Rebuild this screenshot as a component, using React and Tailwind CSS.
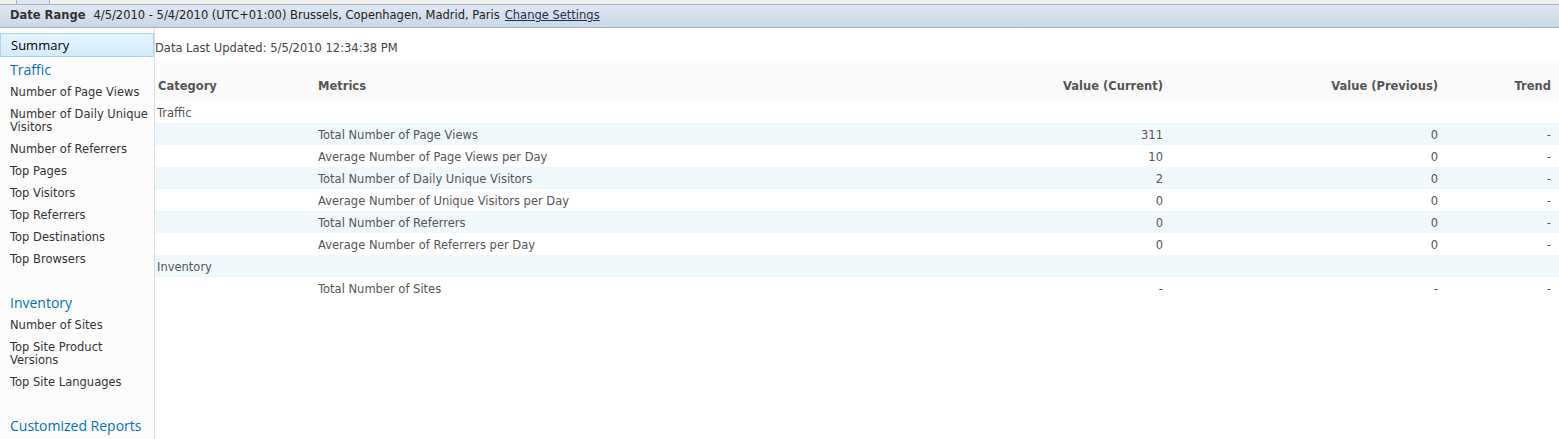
import React from "react";

const verdana = "font-['DejaVu_Sans',Verdana,sans-serif]";
const segoe = "font-['Open_Sans','Noto_Sans',sans-serif]";

const rows = [
  { cat: "Traffic", bg: false },
  { metric: "Total Number of Page Views", cur: "311", prev: "0", trend: "-", bg: true },
  { metric: "Average Number of Page Views per Day", cur: "10", prev: "0", trend: "-", bg: false },
  { metric: "Total Number of Daily Unique Visitors", cur: "2", prev: "0", trend: "-", bg: true },
  { metric: "Average Number of Unique Visitors per Day", cur: "0", prev: "0", trend: "-", bg: false },
  { metric: "Total Number of Referrers", cur: "0", prev: "0", trend: "-", bg: true },
  { metric: "Average Number of Referrers per Day", cur: "0", prev: "0", trend: "-", bg: false },
  { cat: "Inventory", bg: true },
  { metric: "Total Number of Sites", cur: "-", prev: "-", trend: "-", bg: false },
];

function NavHeading({ children, className = "" }) {
  return (
    <div className={`${segoe} text-[14px] text-[#0072bc] px-[10px] leading-[22px] ${className}`}>
      {children}
    </div>
  );
}

function NavItem({ children }) {
  return (
    <div className="pl-[10px] pr-[4px] py-[4.5px] text-[11.5px] leading-[13px] text-[#333]">{children}</div>
  );
}

export default function App() {
  return (
    <div className={`w-full h-[439px] overflow-hidden bg-white ${verdana}`}>
      {/* top strip with tab */}
      <div className="h-[5px] bg-[#f2f2f2] border-b border-[#a8aeb8] flex">
        <div className="ml-[16px] w-[34px] h-[4px] bg-[#dde8f4] border-x border-[#9fb2c8]" />
      </div>

      {/* date range bar */}
      <div className="h-[23px] flex items-center px-[10px] bg-gradient-to-b from-[#dfe8f3] to-[#cad7e7] border-b border-[#a4adbd] text-[11.5px] text-[#222]">
        <span className="font-bold text-[#333]">Date Range</span>
        <span className="ml-[8px]">4/5/2010 - 5/4/2010 (UTC+01:00) Brussels, Copenhagen, Madrid, Paris</span>
        <a className="ml-[5px] underline text-[#1f2f4f]">Change Settings</a>
      </div>

      <div className="flex h-[411px]">
        {/* sidebar */}
        <div className="w-[155px] shrink-0 border-r border-[#dcdee2] bg-[#fcfcfd] pt-[5px]">
          <div className={`${segoe} h-[24px] flex items-center px-[10px] pt-[1px] text-[13px] text-black bg-gradient-to-b from-[#e6f4fe] to-[#d3ebfc] border border-[#a9d2f3]`}>
            Summary
          </div>
          <NavHeading className="mt-[2px]">Traffic</NavHeading>
          <NavItem>Number of Page Views</NavItem>
          <NavItem>Number of Daily Unique Visitors</NavItem>
          <NavItem>Number of Referrers</NavItem>
          <NavItem>Top Pages</NavItem>
          <NavItem>Top Visitors</NavItem>
          <NavItem>Top Referrers</NavItem>
          <NavItem>Top Destinations</NavItem>
          <NavItem>Top Browsers</NavItem>
          <NavHeading className="mt-[22px]">Inventory</NavHeading>
          <NavItem>Number of Sites</NavItem>
          <NavItem>Top Site Product Versions</NavItem>
          <NavItem>Top Site Languages</NavItem>
          <NavHeading className="mt-[22px]">Customized Reports</NavHeading>
        </div>

        {/* main */}
        <div className="flex-1 text-[11.5px] text-[#555]">
          <div className="h-[35px] flex items-center pt-[6px] text-[#444]">
            Data Last Updated: 5/5/2010 12:34:38 PM
          </div>
          <div className="grid grid-cols-[163px_1fr_275px_275px_113px]">
            <div className="contents font-bold text-[#555]">
              {["Category", "Metrics", "Value (Current)", "Value (Previous)", "Trend"].map((h, i) => (
                <div
                  key={h}
                  className={`h-[38px] bg-[#fafafa] pt-[16px] leading-[14px] ${
                    i === 0 ? "pl-[3px]" : i === 1 ? "" : "text-right pr-[8px]"
                  }`}
                >
                  {h}
                </div>
              ))}
            </div>
            {rows.map((r, idx) => {
              const bg = r.bg ? "bg-[#f1f8fb]" : "bg-white";
              const cell = `h-[22px] flex items-center pt-[3px] ${bg}`;
              return (
                <div key={idx} className="contents">
                  <div className={`${cell} pl-[2px]`}>{r.cat || ""}</div>
                  <div className={cell}>{r.metric || ""}</div>
                  <div className={`${cell} justify-end pr-[8px]`}>{r.cur || ""}</div>
                  <div className={`${cell} justify-end pr-[8px]`}>{r.prev || ""}</div>
                  <div className={`${cell} justify-end pr-[8px]`}>{r.trend || ""}</div>
                </div>
              );
            })}
          </div>
        </div>
      </div>
    </div>
  );
}
